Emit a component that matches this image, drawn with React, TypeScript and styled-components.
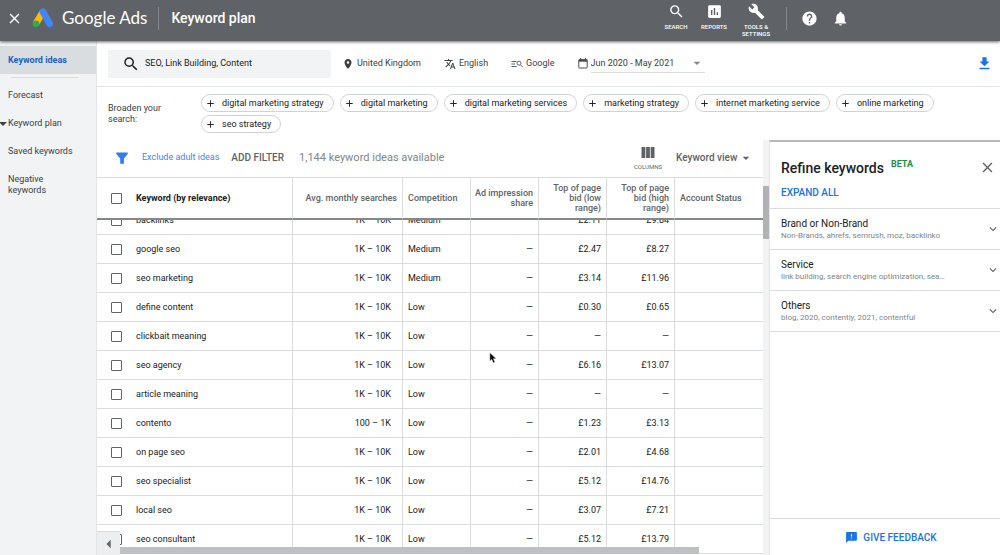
import React, { useLayoutEffect, useRef } from "react";
import styled, { createGlobalStyle, css } from "styled-components";
import {
  MdAdd,
  MdArrowDropDown,
  MdArrowLeft,
  MdAssessment,
  MdBuild,
  MdClose,
  MdExpandMore,
  MdFeedback,
  MdGetApp,
  MdHelp,
  MdNotifications,
  MdPlace,
  MdSearch,
  MdTranslate,
} from "react-icons/md";

const GlobalStyle = createGlobalStyle`
  *, *::before, *::after { box-sizing: border-box; }
  body {
    margin: 0;
    background: #fff;
    color: #3c4043;
    font: 9px/11px Roboto, "Liberation Sans", sans-serif;
  }
  button, input, select { font: inherit; color: inherit; }
  button { border: 0; background: none; padding: 0; cursor: pointer; }
  svg { display: block; flex: none; }
`;

const Page = styled.div`
  height: 100vh;
  display: flex;
  flex-direction: column;
  overflow: hidden;
`;

const Header = styled.header`
  position: relative;
  z-index: 3;
  flex: none;
  display: flex;
  align-items: center;
  height: 41px;
  padding: 0 151px 5px 6px;
  background: #5f6368;
  color: #fff;
  box-shadow: 0 1px 3px rgba(0, 0, 0, 0.6);
`;

const HeaderButton = styled.button`
  display: flex;
  align-items: center;
`;

const Brand = styled.a`
  display: flex;
  align-items: center;
  gap: 8px;
  margin-left: 9px;
  color: #fff;
  text-decoration: none;
  font: 17px/22px Lato, sans-serif;
`;

const Divider = styled.span`
  width: 1px;
  height: 23px;
  background: #85898d;
`;

const PageTitle = styled.h1`
  margin: 0;
  font-size: 14px;
  line-height: 22px;
  font-weight: 500;
`;

const TitleGroup = styled.div`
  display: flex;
  align-items: center;
  gap: 12px;
  margin-left: 11px;
`;

const Tools = styled.nav`
  display: flex;
  align-items: center;
  gap: 14px;
  margin-left: auto;
`;

const ToolButton = styled.button<{ $wide?: boolean }>`
  display: flex;
  flex-direction: column;
  align-items: center;
  gap: 3px;
  align-self: flex-start;
  height: 36px;
  padding-top: 3px;
  width: ${(p) => (p.$wide ? 32 : 24)}px;
  font-size: 6px;
  line-height: 7px;
  font-weight: 500;
  color: #fff;
`;

const Body = styled.div`
  flex: 1;
  display: flex;
  min-height: 0;
`;

const Sidebar = styled.nav`
  flex: none;
  width: 97px;
  padding-top: 5px;
  background: #f1f3f4;
  border-right: 1px solid #e3e5e7;
`;

const SideLink = styled.a<{ $active?: boolean }>`
  position: relative;
  display: block;
  padding: 9px 20px 8px 8px;
  color: #3c4043;
  text-decoration: none;
  white-space: ${(p) => (p.$active ? "nowrap" : "normal")};
  ${(p) =>
    p.$active &&
    css`
      background: #dadde0;
      color: #1a5fc8;
      font-weight: 700;
    `}
`;

const SideRule = styled.hr`
  margin: 3px 17px 3px 11px;
  border: 0;
  border-top: 1px solid #dadce0;
`;

const ExpandMark = styled.span`
  position: absolute;
  left: -1px;
  top: 13px;
  border: 4px solid transparent;
  border-top-color: #3c4043;
  border-bottom: 0;
`;

const Main = styled.main`
  flex: 1;
  min-width: 0;
  display: flex;
  flex-direction: column;
`;

const CriteriaBar = styled.div`
  flex: none;
  display: flex;
  align-items: center;
  gap: 23px;
  height: 46px;
  padding: 0 7px 0 11px;
  border-bottom: 1px solid #e3e4e6;
`;

const SearchBox = styled.label`
  display: flex;
  align-items: center;
  gap: 5px;
  width: 223px;
  height: 28px;
  margin-right: -12px;
  padding: 0 14px;
  background: #f1f3f4;
  color: #202124;

  input {
    flex: 1;
    min-width: 0;
    padding: 0;
    border: 0;
    background: none;
    outline: none;
  }
`;

const Criterion = styled.button`
  display: flex;
  align-items: center;
  gap: 3px;
  color: #3c4043;
`;

const DateField = styled.label`
  display: flex;
  align-items: center;
  gap: 3px;
`;

const SelectWrap = styled.span<{ $line?: boolean }>`
  display: flex;
  align-items: center;
  height: 18px;
  border-bottom: ${(p) => (p.$line ? "1px solid #dadce0" : "0")};

  select {
    appearance: none;
    width: ${(p) => (p.$line ? 98 : 62)}px;
    padding: 0;
    border: 0;
    background: none;
    outline: none;
  }
`;

const DownloadButton = styled.button`
  margin-left: auto;
  color: #1a73e8;
`;

const Broaden = styled.section`
  flex: none;
  display: flex;
  align-items: center;
  gap: 28px;
  padding: 7px 60px 7px 11px;
`;

const BroadenLabel = styled.span`
  width: 65px;
`;

const Chips = styled.div`
  flex: 1;
  display: flex;
  flex-wrap: wrap;
  gap: 3px 6px;
`;

const Chip = styled.button`
  display: flex;
  align-items: center;
  gap: 6px;
  height: 18px;
  padding: 0 9px 0 3px;
  border: 1px solid #d0d3d6;
  border-radius: 9px;
  color: #202124;
`;

const Workspace = styled.div`
  flex: 1;
  display: flex;
  min-height: 0;
`;

const Results = styled.section`
  position: relative;
  flex: 1;
  min-width: 0;
  display: flex;
  flex-direction: column;
`;

const Toolbar = styled.div`
  flex: none;
  display: flex;
  align-items: center;
  height: 38px;
  padding: 0 9px 2px 18px;
  border-bottom: 1px solid #dadce0;
`;

const FilterLink = styled.a`
  margin-left: 13px;
  color: #4285f4;
  text-decoration: none;
`;

const AddFilter = styled.button`
  margin-left: 12px;
  font-size: 10px;
  font-weight: 500;
  color: #5f6368;
`;

const ResultCount = styled.span`
  margin-left: 15px;
  font-size: 11px;
  color: #80868b;
`;

const ToolbarEnd = styled.div`
  display: flex;
  align-items: center;
  gap: 14px;
  margin-left: auto;
  color: #5f6368;
`;

const ColumnsButton = styled.button`
  display: flex;
  flex-direction: column;
  align-items: center;
  gap: 5px;
  padding-top: 1px;
  font-size: 6px;
  line-height: 7px;
`;

const ViewSelect = styled.label`
  font-size: 10px;
  font-weight: 500;
`;

const TableScroll = styled.div`
  flex: 1;
  min-height: 0;
  padding-bottom: 8px;
  overflow: auto;
  scrollbar-width: none;
`;

const Table = styled.table`
  width: 100%;
  table-layout: fixed;
  border-collapse: separate;
  border-spacing: 0;
`;

const numeric = css<{ $numeric?: boolean }>`
  text-align: ${(p) => (p.$numeric ? "right" : "left")};
`;

const headPadding = (p: { $strong?: boolean; $numeric?: boolean }) =>
  p.$strong ? 0 : p.$numeric ? 2 : 5;

const HeadCell = styled.th<{ $numeric?: boolean; $width?: number; $plain?: boolean; $strong?: boolean }>`
  ${numeric}
  position: sticky;
  top: 0;
  z-index: 1;
  width: ${(p) => (p.$width ? `${p.$width}px` : "auto")};
  height: 42px;
  padding: 0 5px 0 ${headPadding}px;
  background: #fff;
  border-bottom: 2px solid #85888b;
  border-right: ${(p) => (p.$plain ? "0" : "1px solid #dadce0")};
  line-height: 10px;
  font-weight: ${(p) => (p.$strong ? 700 : 500)};
  color: ${(p) => (p.$strong ? "#202124" : "#5f6368")};
`;

const Cell = styled.td<{ $numeric?: boolean; $wide?: boolean; $plain?: boolean; $first?: boolean }>`
  ${numeric}
  height: 29px;
  padding: 0 ${(p) => (p.$wide ? 11 : 5)}px 0 ${(p) => (p.$first ? 0 : 5)}px;
  border-bottom: 1px solid #dadce0;
  border-right: ${(p) => (p.$plain ? "0" : "1px solid #dadce0")};
  white-space: nowrap;
  color: #202124;
`;

const Tick = styled.input`
  display: block;
  appearance: none;
  width: 11px;
  height: 11px;
  margin: 0 0 0 9px;
  border: 1px solid #5f6368;
  border-radius: 1px;
  background: #fff;
`;

const HorizontalBar = styled.div`
  position: absolute;
  left: 23px;
  right: 64px;
  bottom: 1px;
  height: 7px;
  background: #bcbfc4;
`;

const CollapseButton = styled.button`
  position: absolute;
  left: 0;
  bottom: 0;
  z-index: 2;
  display: flex;
  align-items: center;
  justify-content: center;
  width: 23px;
  height: 24px;
  background: #eceef0;
  border-top: 1px solid #dadce0;
  color: #5f6368;
`;

const PointerMark = styled.svg`
  position: absolute;
  left: 392px;
  top: 212px;
`;

const ScrollTrack = styled.div`
  flex: none;
  width: 6px;
  padding-top: 46px;
  background: #f1f2f4;
`;

const ScrollThumb = styled.div`
  height: 53px;
  background: #b0b2b5;
`;

const Refine = styled.aside`
  flex: none;
  width: 231px;
  display: flex;
  flex-direction: column;
  border-top: 2px solid #b6b8ba;
  border-left: 1px solid #e3e4e6;
`;

const RefineHead = styled.div`
  display: flex;
  align-items: flex-start;
  gap: 7px;
  padding: 17px 4px 0 11px;
`;

const RefineTitle = styled.h2`
  margin: 0;
  font-size: 14px;
  line-height: 18px;
  font-weight: 500;
  color: #202124;
`;

const Beta = styled.span`
  font-weight: 700;
  color: #1e8e3e;
`;

const CloseButton = styled.button`
  margin-left: auto;
  color: #5f6368;
`;

const ExpandAll = styled.button`
  align-self: flex-start;
  margin: 10px 11px;
  font-weight: 500;
  font-size: 10px;
  line-height: 11px;
  color: #1a73e8;
`;

const GroupList = styled.div`
  border-bottom: 1px solid #dadce0;
`;

const Group = styled.button`
  display: flex;
  align-items: center;
  justify-content: space-between;
  width: 100%;
  height: 41px;
  padding-left: 11px;
  border-top: 1px solid #dadce0;
  text-align: left;
  color: #5f6368;
`;

const GroupText = styled.span`
  display: flex;
  flex-direction: column;
  width: 180px;
  font-size: 8px;
  line-height: 11px;
  color: #80868b;

  strong {
    font-weight: 400;
    font-size: 10px;
    line-height: 12px;
    color: #202124;
  }
`;

const Feedback = styled.button`
  display: flex;
  align-items: center;
  justify-content: center;
  gap: 5px;
  height: 37px;
  margin-top: auto;
  padding-left: 12px;
  border-top: 1px solid #dadce0;
  font-size: 10px;
  font-weight: 500;
  color: #1a73e8;
`;

const AdsLogo = () => (
  <svg width="22" height="20" viewBox="0 0 22 20" aria-hidden="true">
    <path d="M10.5 4.5 4 15.5" stroke="#fbbc04" strokeWidth="6.6" />
    <path d="M11 3.8 17.6 15.6" stroke="#4285f4" strokeWidth="6.8" strokeLinecap="round" />
    <circle cx="4" cy="15.8" r="3.4" fill="#34a853" />
  </svg>
);

const NetworkIcon = () => (
  <svg width="12" height="12" viewBox="0 0 12 12" fill="none" stroke="#5f6368" aria-hidden="true">
    <path d="M0.5 3.5h5M0.5 6h3.5M0.5 8.5h5" />
    <circle cx="8" cy="5.2" r="2" />
    <path d="M9.4 6.7 11.6 9" />
  </svg>
);

const CalendarIcon = () => (
  <svg width="10" height="11" viewBox="0 0 10 11" fill="none" stroke="#4a4e52" aria-hidden="true">
    <rect x="0.8" y="1.6" width="8.4" height="8.4" rx="0.6" />
    <path d="M0.8 2.7h8.4" strokeWidth="2" />
    <path d="M2.6 0v2M7.4 0v2" />
  </svg>
);

const FunnelIcon = () => (
  <svg width="14" height="12" viewBox="0 0 14 12" aria-hidden="true">
    <path d="M1.3 0.5h11.4v1.4L8.9 6.4v5.3H5.2V6.4L1.3 1.9z" fill="#2f7bf2" />
  </svg>
);

const ColumnsIcon = () => (
  <svg width="14" height="11" viewBox="0 0 14 11" fill="#5f6368" aria-hidden="true">
    <path d="M0.5 0h3.8v11H0.5zM5.1 0h3.8v11H5.1zM9.7 0h3.8v11H9.7z" />
  </svg>
);

const chips = [
  "digital marketing strategy",
  "digital marketing",
  "digital marketing services",
  "marketing strategy",
  "internet marketing service",
  "online marketing",
  "seo strategy",
];

const rows: [string, string, string, string, string][] = [
  ["backlinks", "1K – 10K", "Medium", "£2.11", "£9.84"],
  ["google seo", "1K – 10K", "Medium", "£2.47", "£8.27"],
  ["seo marketing", "1K – 10K", "Medium", "£3.14", "£11.96"],
  ["define content", "1K – 10K", "Low", "£0.30", "£0.65"],
  ["clickbait meaning", "1K – 10K", "Low", "—", "—"],
  ["seo agency", "1K – 10K", "Low", "£6.16", "£13.07"],
  ["article meaning", "1K – 10K", "Low", "—", "—"],
  ["contento", "100 – 1K", "Low", "£1.23", "£3.13"],
  ["on page seo", "1K – 10K", "Low", "£2.01", "£4.68"],
  ["seo specialist", "1K – 10K", "Low", "£5.12", "£14.76"],
  ["local seo", "1K – 10K", "Low", "£3.07", "£7.21"],
  ["seo consultant", "1K – 10K", "Low", "£5.12", "£13.79"],
];

const groups = [
  ["Brand or Non-Brand", "Non-Brands, ahrefs, semrush, moz, backlinko"],
  ["Service", "link building, search engine optimization, sea…"],
  ["Others", "blog, 2020, contently, 2021, contentful"],
];

export default function App() {
  const scroller = useRef<HTMLDivElement>(null);

  // The list opens part-way down its first row.
  useLayoutEffect(() => {
    if (scroller.current) scroller.current.scrollTop = 14;
  }, []);

  return (
    <Page>
      <GlobalStyle />
      <Header>
        <HeaderButton aria-label="Close">
          <MdClose size={17} color="#fff" />
        </HeaderButton>
        <Brand href="#home">
          <AdsLogo />
          Google Ads
        </Brand>
        <TitleGroup>
          <Divider />
          <PageTitle>Keyword plan</PageTitle>
        </TitleGroup>
        <Tools aria-label="Account tools">
          <ToolButton>
            <MdSearch size={17} />
            SEARCH
          </ToolButton>
          <ToolButton>
            <MdAssessment size={17} />
            REPORTS
          </ToolButton>
          <ToolButton $wide>
            <MdBuild size={17} />
            TOOLS &amp; SETTINGS
          </ToolButton>
          <Divider />
          <HeaderButton aria-label="Help">
            <MdHelp size={17} color="#fff" />
          </HeaderButton>
          <HeaderButton aria-label="Notifications">
            <MdNotifications size={17} color="#fff" />
          </HeaderButton>
        </Tools>
      </Header>

      <Body>
        <Sidebar aria-label="Planner">
          <SideLink href="#ideas" $active>
            Keyword ideas
          </SideLink>
          <SideRule />
          <SideLink href="#forecast">Forecast</SideLink>
          <SideLink href="#plan">
            <ExpandMark />
            Keyword plan
          </SideLink>
          <SideLink href="#saved">Saved keywords</SideLink>
          <SideLink href="#negative">Negative keywords</SideLink>
        </Sidebar>

        <Main>
          <CriteriaBar>
            <SearchBox>
              <MdSearch size={18} />
              <input aria-label="Keywords" defaultValue="SEO, Link Building, Content" />
            </SearchBox>
            <Criterion>
              <MdPlace size={12} />
              United Kingdom
            </Criterion>
            <Criterion>
              <MdTranslate size={12} />
              English
            </Criterion>
            <Criterion>
              <NetworkIcon />
              Google
            </Criterion>
            <DateField>
              <CalendarIcon />
              <SelectWrap $line>
                <select aria-label="Date range">
                  <option>Jun 2020 - May 2021</option>
                </select>
                <MdArrowDropDown size={16} color="#80868b" />
              </SelectWrap>
            </DateField>
            <DownloadButton aria-label="Download keyword ideas">
              <MdGetApp size={17} />
            </DownloadButton>
          </CriteriaBar>

          <Broaden>
            <BroadenLabel>Broaden your search:</BroadenLabel>
            <Chips>
              {chips.map((chip) => (
                <Chip key={chip}>
                  <MdAdd size={11} />
                  {chip}
                </Chip>
              ))}
            </Chips>
          </Broaden>

          <Workspace>
            <Results>
              <Toolbar>
                <FunnelIcon />
                <FilterLink href="#exclude">Exclude adult ideas</FilterLink>
                <AddFilter>ADD FILTER</AddFilter>
                <ResultCount>1,144 keyword ideas available</ResultCount>
                <ToolbarEnd>
                  <ColumnsButton>
                    <ColumnsIcon />
                    COLUMNS
                  </ColumnsButton>
                  <ViewSelect>
                    <SelectWrap>
                      <select aria-label="View">
                        <option>Keyword view</option>
                      </select>
                      <MdArrowDropDown size={16} />
                    </SelectWrap>
                  </ViewSelect>
                </ToolbarEnd>
              </Toolbar>

              <TableScroll ref={scroller}>
                <Table>
                  <thead>
                    <tr>
                      <HeadCell $width={39} $plain>
                        <Tick type="checkbox" aria-label="Select all keywords" />
                      </HeadCell>
                      <HeadCell $strong>Keyword (by relevance)</HeadCell>
                      <HeadCell $width={110} $numeric>
                        Avg. monthly searches
                      </HeadCell>
                      <HeadCell $width={68}>Competition</HeadCell>
                      <HeadCell $width={68} $numeric>
                        Ad impression share
                      </HeadCell>
                      <HeadCell $width={68} $numeric>
                        Top of page bid (low range)
                      </HeadCell>
                      <HeadCell $width={68} $numeric>
                        Top of page bid (high range)
                      </HeadCell>
                      <HeadCell $width={88} $plain>
                        Account Status
                      </HeadCell>
                    </tr>
                  </thead>
                  <tbody>
                    {rows.map(([keyword, searches, competition, low, high]) => (
                      <tr key={keyword}>
                        <Cell $plain>
                          <Tick type="checkbox" aria-label={`Select ${keyword}`} />
                        </Cell>
                        <Cell $first>{keyword}</Cell>
                        <Cell $numeric $wide>
                          {searches}
                        </Cell>
                        <Cell>{competition}</Cell>
                        <Cell $numeric>—</Cell>
                        <Cell $numeric>{low}</Cell>
                        <Cell $numeric>{high}</Cell>
                        <Cell $plain />
                      </tr>
                    ))}
                  </tbody>
                </Table>
              </TableScroll>

              <HorizontalBar />
              <CollapseButton aria-label="Collapse">
                <MdArrowLeft size={20} />
              </CollapseButton>
              <PointerMark width="9" height="12" viewBox="0 0 9 12" aria-hidden="true">
                <path
                  d="M0.8 0.6v8.6l2-1.8 1.5 3.6 1.7-0.8-1.5-3.4h2.8z"
                  fill="#000"
                  stroke="#fff"
                  strokeWidth="0.5"
                />
              </PointerMark>
            </Results>

            <ScrollTrack>
              <ScrollThumb />
            </ScrollTrack>

            <Refine>
              <RefineHead>
                <RefineTitle>Refine keywords</RefineTitle>
                <Beta>BETA</Beta>
                <CloseButton aria-label="Close refine panel">
                  <MdClose size={17} />
                </CloseButton>
              </RefineHead>
              <ExpandAll>EXPAND ALL</ExpandAll>
              <GroupList>
                {groups.map(([title, detail]) => (
                  <Group key={title}>
                    <GroupText>
                      <strong>{title}</strong>
                      {detail}
                    </GroupText>
                    <MdExpandMore size={14} />
                  </Group>
                ))}
              </GroupList>
              <Feedback>
                <MdFeedback size={13} />
                GIVE FEEDBACK
              </Feedback>
            </Refine>
          </Workspace>
        </Main>
      </Body>
    </Page>
  );
}
